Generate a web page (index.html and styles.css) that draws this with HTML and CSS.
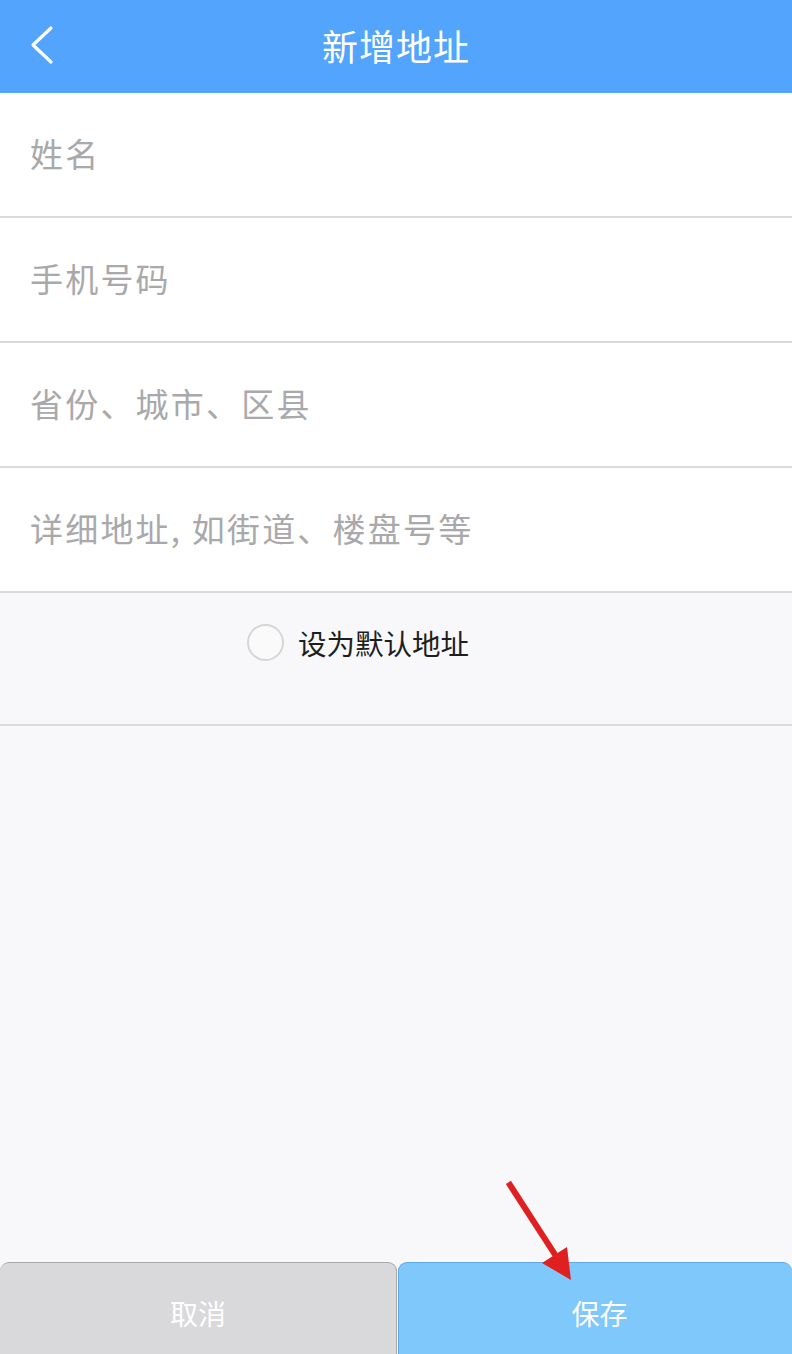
FILE: index.html
```html
<!DOCTYPE html>
<html lang="zh-CN">
<head>
<meta charset="utf-8">
<title>新增地址</title>
<link rel="stylesheet" href="styles.css">
</head>
<body>
<div class="page">
  <header class="topbar">
    <span class="back">
      <svg width="30" height="44" viewBox="0 0 30 44"><polyline points="21,5 3,22 21,39" fill="none" stroke="#fff" stroke-width="3.2" stroke-linecap="round" stroke-linejoin="round"/></svg>
    </span>
    <h1 class="title">新增地址</h1>
  </header>
  <div class="form">
    <div class="row"><span class="ph">姓名</span></div>
    <div class="row"><span class="ph">手机号码</span></div>
    <div class="row"><span class="ph">省份、城市、区县</span></div>
    <div class="row"><span class="ph">详细地址, 如街道、楼盘号等</span></div>
  </div>
  <div class="default-row">
    <span class="radio"></span>
    <span class="default-label">设为默认地址</span>
  </div>
  <div class="spacer"></div>
  <div class="actions">
    <div class="btn cancel">取消</div>
    <div class="btn save">保存</div>
  </div>
  <svg class="arrow" width="792" height="1354" viewBox="0 0 792 1354">
    <line x1="510" y1="1185" x2="556" y2="1256" stroke="#e01f20" stroke-width="6" stroke-linecap="square"/>
    <polygon points="542,1263 567,1247 571,1280" fill="#e01f20"/>
  </svg>
</div>
</body>
</html>
```

FILE: styles.css
```css
* { box-sizing: border-box; }
html, body { margin: 0; padding: 0; }
body {
  font-family: "Noto Sans CJK SC", "Noto Sans", sans-serif;
  background: #f8f7f9;
}
.page {
  position: relative;
  width: 792px;
  height: 1354px;
  display: flex;
  flex-direction: column;
  overflow: hidden;
  background: #f8f7f9;
}
.topbar {
  height: 93px;
  background: #52a4fc;
  display: flex;
  align-items: center;
  justify-content: center;
  position: relative;
  flex-shrink: 0;
}
.back {
  position: absolute;
  left: 30px;
  top: 23px;
  display: block;
  line-height: 0;
}
.title {
  margin: 0;
  color: #fff;
  font-size: 36px;
  font-weight: 400;
  letter-spacing: 1px;
  line-height: 1;
  margin-top: -4px;
}
.form { background: #fff; }
.row {
  height: 125px;
  border-bottom: 2px solid #dadada;
  display: flex;
  align-items: center;
  padding-left: 30px;
}
.ph {
  color: #a9a8aa;
  font-size: 33px;
  letter-spacing: 2.2px;
  line-height: 1;
  margin-top: -3px;
}
.default-row {
  height: 133px;
  background: #f8f7f9;
  border-bottom: 2px solid #dadada;
  display: flex;
  justify-content: center;
  align-items: flex-start;
  padding-top: 31px;
  padding-right: 76px;
  gap: 14px;
}
.radio {
  width: 37px;
  height: 37px;
  border-radius: 50%;
  border: 2px solid #d6d6d6;
  background: #fafafa;
}
.default-label {
  color: #1e1e1e;
  font-size: 28.5px;
  line-height: 37px;
}
.spacer { flex: 1; }
.actions {
  display: grid;
  grid-template-columns: 397px 1fr;
  gap: 1px;
  height: 92px;
  flex-shrink: 0;
}
.btn {
  display: flex;
  align-items: center;
  justify-content: center;
  color: #fff;
  font-size: 28px;
  border-radius: 9px 9px 0 0;
  padding-top: 8px;
}
.cancel {
  background: #d9d8da;
  border: 1.5px solid #a8a7a9;
  border-bottom: none;
  border-left: none;
}
.save {
  background: #7fc8fc;
  border: 1.5px solid #5ea7e8;
  border-bottom: none;
  border-right: none;
  padding-left: 8px;
}
.arrow {
  position: absolute;
  left: 0;
  top: 0;
  pointer-events: none;
}
```
